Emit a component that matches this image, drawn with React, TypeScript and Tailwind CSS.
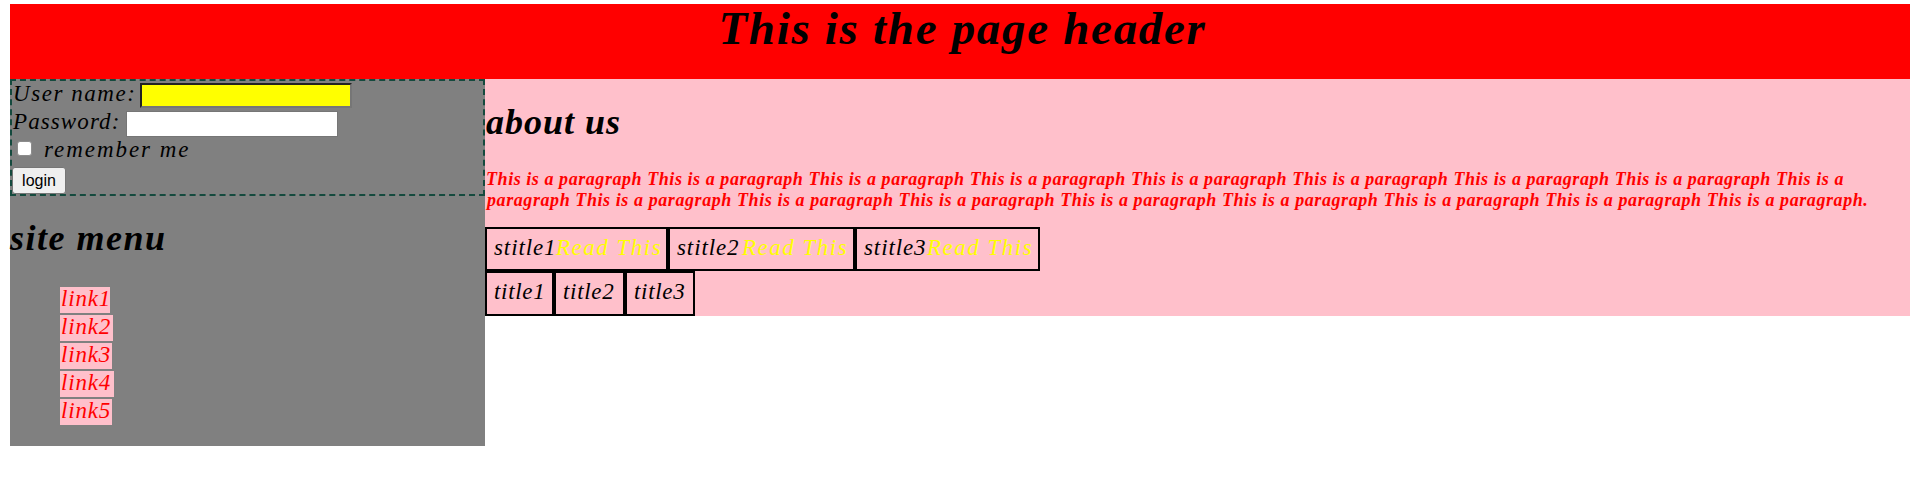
const links = [
  { label: "link1", width: "w-[50px]" },
  { label: "link2", width: "w-[53px]" },
  { label: "link3", width: "w-[52px]" },
  { label: "link4", width: "w-[54px]" },
  { label: "link5", width: "w-[52px]" },
];

const stories = [
  { label: "stitle1", box: "w-[183px]", text: "w-[62px]" },
  { label: "stitle2", box: "w-[187px]", text: "w-[65px]" },
  { label: "stitle3", box: "w-[185px]", text: "w-[63px]" },
];

const titles = [
  { label: "title1", box: "w-[69px]" },
  { label: "title2", box: "w-[71px]" },
  { label: "title3", box: "w-[70px]" },
];

function Sidebar() {
  return (
    <aside className="h-[367px] w-[475px] shrink-0 bg-[#808080]">
      <form className="h-[117px] border-2 border-dashed border-[#154a3e] pl-px" onSubmit={(e) => e.preventDefault()}>
        <label className="flex h-7 items-start">
          <span className="w-[127px] pt-px leading-[24px] tracking-[1.55px]">User name:</span>
          <input className="mt-[2px] h-[25px] w-[212px] border-2 border-t-[#222] border-l-[#222] border-r-[#767676] border-b-[#767676] bg-[#ffff00] outline-none" />
        </label>
        <label className="flex h-7 items-start">
          <span className="w-[113px] pt-px leading-[24px] tracking-[1.1px]">Password:</span>
          <input type="password" className="mt-[2px] h-[26px] w-[212px] border border-[#767676] bg-white outline-none" />
        </label>
        <label className="flex h-7 items-start">
          <input type="checkbox" className="mt-[4px] ml-[4px] size-[15px] appearance-none rounded-[3px] border border-[#8c8c8c] bg-white checked:bg-[#0075ff]" />
          <span className="ml-[12px] pt-px leading-[24px] tracking-[1.95px]">remember me</span>
        </label>
        <button className="mt-[2px] -ml-px flex h-[27px] w-[54px] items-center justify-center rounded-[3px] border border-[#767676] bg-[#efefef] font-['Liberation_Sans',sans-serif] text-[16px] leading-none not-italic">
          login
        </button>
      </form>
      <h2 className="mt-[21px] h-[42px] text-[36px] leading-[42px] font-bold tracking-[1.5px]">site menu</h2>
      <ul className="mt-[28px] flex flex-col items-start gap-[2px] pl-[50px]">
        {links.map((l) => (
          <li key={l.label} className={`h-[26px] bg-[#ffc0cb] pl-px leading-[23px] tracking-[0.8px] whitespace-nowrap text-[#ff0000] ${l.width}`}>
            {l.label}
          </li>
        ))}
      </ul>
    </aside>
  );
}

function Content() {
  return (
    <main className="flow-root h-[237px] w-[1425px] bg-[#ffc0cb]">
      <h2 className="mt-[22px] h-[42px] pl-px text-[36px] leading-[42px] font-bold tracking-[1px]">about us</h2>
      <p className="mt-[26px] h-[42px] text-[18px] leading-[21px] font-bold text-[#ff0000]">
        <span className="block pl-px tracking-[0.56px] whitespace-nowrap">{"This is a paragraph ".repeat(8)}This is a</span>
        <span className="block pl-[2px] tracking-[0.58px] whitespace-nowrap">paragraph {"This is a paragraph ".repeat(7)}This is a paragraph.</span>
      </p>
      <div className="mt-4 flex h-11">
        {stories.map((s) => (
          <div key={s.label} className={`flex h-11 shrink-0 border-2 border-black pt-[7px] pl-[7px] leading-[24px] whitespace-nowrap ${s.box}`}>
            <span className={`shrink-0 tracking-[0.9px] ${s.text}`}>{s.label}</span>
            <span className="tracking-[1.5px] text-[#ffff00]">Read This</span>
          </div>
        ))}
      </div>
      <div className="flex h-[45px]">
        {titles.map((t) => (
          <div key={t.label} className={`h-[45px] shrink-0 border-2 border-black pt-[7px] pl-[7px] leading-[24px] tracking-[0.7px] whitespace-nowrap ${t.box}`}>
            {t.label}
          </div>
        ))}
      </div>
    </main>
  );
}

export default function App() {
  return (
    <div className="flow-root min-h-[494px] bg-white pl-[10px] font-['Liberation_Serif',serif] text-[23px] text-black italic">
      <header className="mt-1 h-[75px] w-[1900px] bg-[#ff0000] text-center">
        <h1 className="pl-[5px] text-[47px] leading-[48px] font-bold tracking-[1.7px]">This is the page header</h1>
      </header>
      <div className="flex items-start">
        <Sidebar />
        <Content />
      </div>
    </div>
  );
}
